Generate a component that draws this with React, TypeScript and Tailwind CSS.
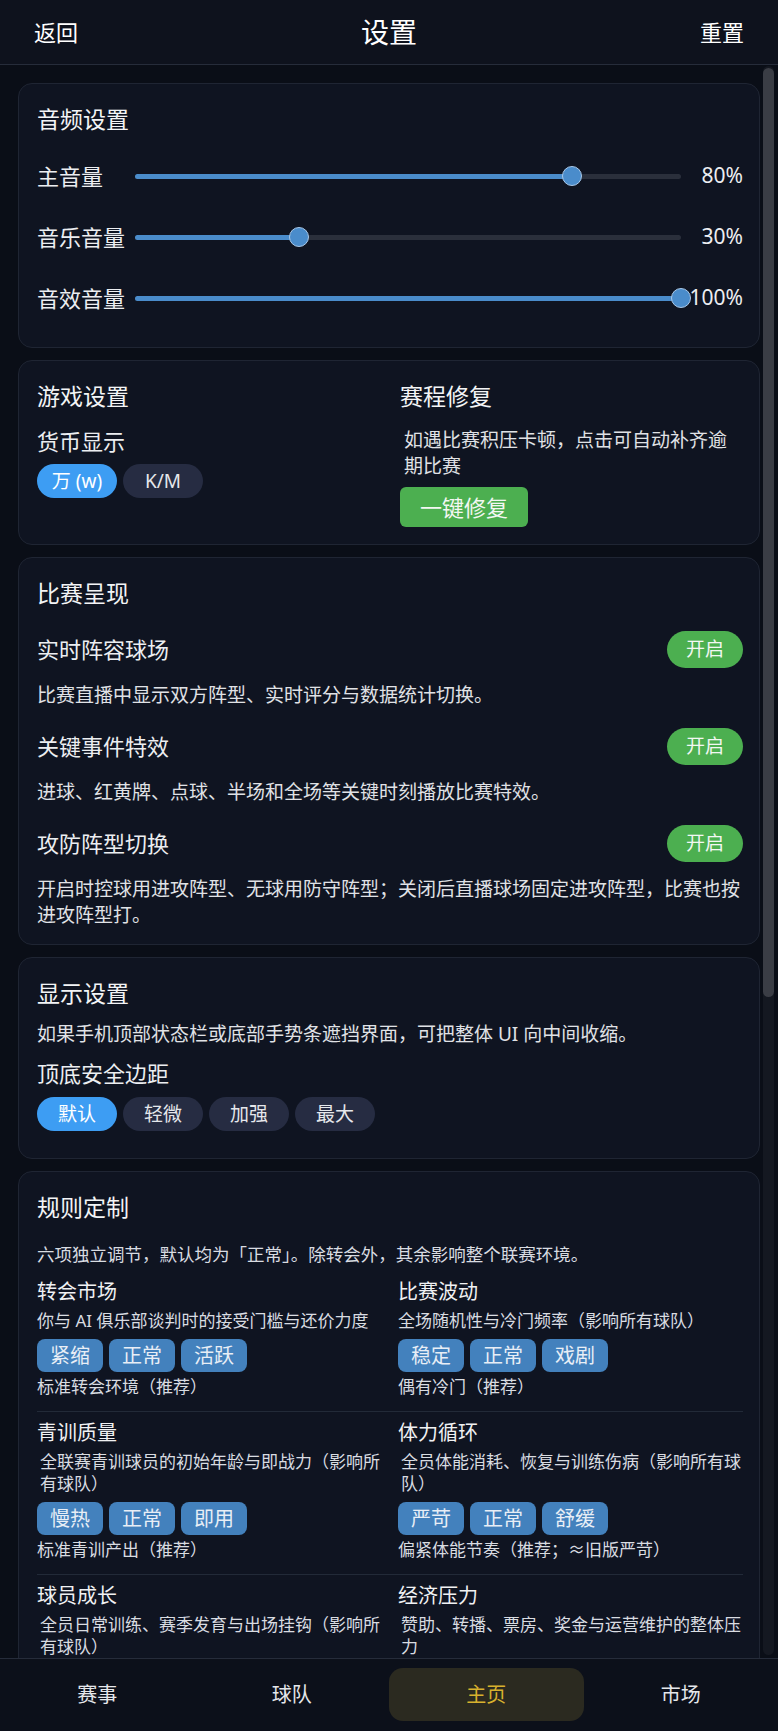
import React from 'react'

const sliders = [
  { label: '主音量', value: 80 },
  { label: '音乐音量', value: 30 },
  { label: '音效音量', value: 100 },
]

const toggles = [
  { label: '实时阵容球场', desc: '比赛直播中显示双方阵型、实时评分与数据统计切换。' },
  { label: '关键事件特效', desc: '进球、红黄牌、点球、半场和全场等关键时刻播放比赛特效。' },
  {
    label: '攻防阵型切换',
    desc: '开启时控球用进攻阵型、无球用防守阵型；关闭后直播球场固定进攻阵型，比赛也按进攻阵型打。',
  },
]

type Rule = { title: string; desc: string; opts?: string[]; note?: string; indent: boolean }

// the last row is cut off by the bottom nav, only title + desc show
const rules: Rule[][] = [
  [
    { title: '转会市场', desc: '你与 AI 俱乐部谈判时的接受门槛与还价力度', opts: ['紧缩', '正常', '活跃'], note: '标准转会环境（推荐）', indent: false },
    { title: '比赛波动', desc: '全场随机性与冷门频率（影响所有球队）', opts: ['稳定', '正常', '戏剧'], note: '偶有冷门（推荐）', indent: false },
  ],
  [
    { title: '青训质量', desc: '全联赛青训球员的初始年龄与即战力（影响所有球队）', opts: ['慢热', '正常', '即用'], note: '标准青训产出（推荐）', indent: true },
    { title: '体力循环', desc: '全员体能消耗、恢复与训练伤病（影响所有球队）', opts: ['严苛', '正常', '舒缓'], note: '偏紧体能节奏（推荐；≈旧版严苛）', indent: true },
  ],
  [
    { title: '球员成长', desc: '全员日常训练、赛季发育与出场挂钩（影响所有球队）', indent: true },
    { title: '经济压力', desc: '赞助、转播、票房、奖金与运营维护的整体压力', indent: true },
  ],
]

const tabs = ['赛事', '球队', '主页', '市场']

const Card = ({ className, children }: { className?: string; children: React.ReactNode }) => (
  <div className={`rounded-[14px] border border-[#1f2533] bg-[#0f1421] pl-[18px] pr-[16px] pt-[18px] ${className ?? ''}`}>
    {children}
  </div>
)

const CardTitle = ({ children }: { children: React.ReactNode }) => (
  <div className="text-[23px] leading-[34px] text-[#f3f4f6]">{children}</div>
)

const Slider = ({ label, value }: { label: string; value: number }) => (
  <div className="flex h-10 items-center">
    <div className="w-[98px] text-[22px] leading-[30px] text-[#eceef1]">{label}</div>
    <div className="relative h-[5px] flex-1 rounded-full bg-[#2a2f3b]">
      <div className="h-full rounded-full bg-[#4a8ccb]" style={{ width: `${value}%` }} />
      <div
        className="absolute top-1/2 h-5 w-5 -translate-x-1/2 -translate-y-1/2 rounded-full border border-[#a9c8e8] bg-[#4a8ccb]"
        style={{ left: `${value}%` }}
      />
    </div>
    <div className="w-[62px] text-right text-[21px] text-[#eceef1]">{value}%</div>
  </div>
)

const Pill = ({ label, active }: { label: string; active?: boolean }) => (
  <button
    className={`flex h-[34px] w-[80px] items-center justify-center rounded-full text-[19px] ${
      active ? 'bg-[#3d9df3] text-white' : 'bg-[#262c42] text-[#e5e7eb]'
    }`}
  >
    {label}
  </button>
)

const RuleItem = ({ rule }: { rule: Rule }) => (
  <div>
    <div className="text-[20px] leading-[28px] text-[#f0f1f3]">{rule.title}</div>
    <div className={`mt-1 text-[17px] leading-[22px] text-[#d9dce1] ${rule.indent ? 'pl-[3px]' : ''}`}>{rule.desc}</div>
    {rule.opts && (
      <div className="mt-[7px] flex gap-[6px]">
        {rule.opts.map((o) => (
          <button key={o} className="flex h-[33px] w-[66px] items-center justify-center rounded-[8px] bg-[#4381bd] text-[20px] text-[#e8eef6]">
            {o}
          </button>
        ))}
      </div>
    )}
    {rule.note && <div className="mt-[4px] text-[17px] leading-[22px] text-[#d9dce1]">{rule.note}</div>}
  </div>
)

export default function App() {
  return (
    <div className="flex h-[1731px] w-full flex-col overflow-hidden bg-[#0a0e17] font-['Noto_Sans','Noto_Sans_CJK_SC',sans-serif] text-white">
      {/* header */}
      <div className="flex h-[65px] shrink-0 items-center justify-between border-b border-[#262c3a] bg-[#0e121d] px-[34px]">
        <span className="text-[22px]">返回</span>
        <span className="text-[28px]">设置</span>
        <span className="text-[22px]">重置</span>
      </div>

      <div className="flex min-h-0 flex-1 overflow-hidden">
        <div className="flex w-[760px] shrink-0 flex-col gap-[12px] pl-[18px] pt-[18px]">
          {/* 音频设置 */}
          <Card className="pb-[29px]">
            <CardTitle>音频设置</CardTitle>
            <div className="mt-5 flex flex-col gap-[21px]">
              {sliders.map((s) => (
                <Slider key={s.label} {...s} />
              ))}
            </div>
          </Card>

          {/* 游戏设置 / 赛程修复 */}
          <Card className="pb-[17px]">
            <div className="grid grid-cols-2 gap-[20px]">
              <div>
                <CardTitle>游戏设置</CardTitle>
                <div className="mt-[13px] text-[22px] leading-[30px] text-[#eceef1]">货币显示</div>
                <div className="mt-2 flex gap-[6px]">
                  <Pill label="万 (w)" active />
                  <Pill label="K/M" />
                </div>
              </div>
              <div>
                <CardTitle>赛程修复</CardTitle>
                <div className="mt-[14px] pl-1 text-[19px] leading-[26px] text-[#e0e2e6]">如遇比赛积压卡顿，点击可自动补齐逾期比赛</div>
                <button className="mt-2 flex h-10 w-[128px] items-center justify-center rounded-[6px] bg-[#4caf50] text-[22px] text-[#f2f7f2]">
                  一键修复
                </button>
              </div>
            </div>
          </Card>

          {/* 比赛呈现 */}
          <Card className="pb-4">
            <CardTitle>比赛呈现</CardTitle>
            <div className="mt-[21px] flex flex-col gap-5">
              {toggles.map((t) => (
                <div key={t.label}>
                  <div className="flex h-[36px] items-center justify-between">
                    <span className="text-[22px] text-[#eceef1]">{t.label}</span>
                    <button className="flex h-[37px] w-[76px] items-center justify-center rounded-full bg-[#4caf50] text-[19px] text-[#f2f7f2]">
                      开启
                    </button>
                  </div>
                  <div className="mt-[15px] text-[19px] leading-[26px] text-[#e0e2e6]">{t.desc}</div>
                </div>
              ))}
            </div>
          </Card>

          {/* 显示设置 */}
          <Card className="pb-[27px]">
            <CardTitle>显示设置</CardTitle>
            <div className="mt-[11px] text-[19px] leading-[26px] text-[#e0e2e6]">
              如果手机顶部状态栏或底部手势条遮挡界面，可把整体 UI 向中间收缩。
            </div>
            <div className="mt-[11px] text-[22px] leading-[30px] text-[#eceef1]">顶底安全边距</div>
            <div className="mt-[9px] flex gap-[6px]">
              <Pill label="默认" active />
              <Pill label="轻微" />
              <Pill label="加强" />
              <Pill label="最大" />
            </div>
          </Card>

          {/* 规则定制 */}
          <Card className="pb-6">
            <CardTitle>规则定制</CardTitle>
            <div className="mt-[18px] text-[17.5px] leading-[24px] text-[#d9dce1]">
              六项独立调节，默认均为「正常」。除转会外，其余影响整个联赛环境。
            </div>
            <div className="mt-[12px] flex flex-col">
              {rules.map((row, i) => (
                <div
                  key={i}
                  className={`grid grid-cols-2 gap-4 ${i > 0 ? 'pt-[7px]' : ''} ${i < rules.length - 1 ? 'border-b border-[#222a38] pb-[13px]' : ''}`}
                >
                  {row.map((r) => (
                    <RuleItem key={r.title} rule={r} />
                  ))}
                </div>
              ))}
            </div>
          </Card>
        </div>

        {/* scrollbar */}
        <div className="ml-[3px] mt-[1px] mb-[3px] w-[11px] shrink-0 rounded-full bg-[#141821]">
          <div className="mt-[2px] h-[929px] rounded-full bg-[#3a3d45]" />
        </div>
      </div>

      {/* bottom nav */}
      <div className="grid h-[73px] shrink-0 grid-cols-4 border-t border-[#262c3a] bg-[#0c101a] pt-[9px] pb-[10px]">
        {tabs.map((t) => (
          <div
            key={t}
            className={`flex items-center justify-center rounded-[14px] text-[20px] ${
              t === '主页' ? 'bg-[#2b2a20] text-[#d8b12e]' : 'text-[#e5e7eb]'
            }`}
          >
            {t}
          </div>
        ))}
      </div>
    </div>
  )
}
